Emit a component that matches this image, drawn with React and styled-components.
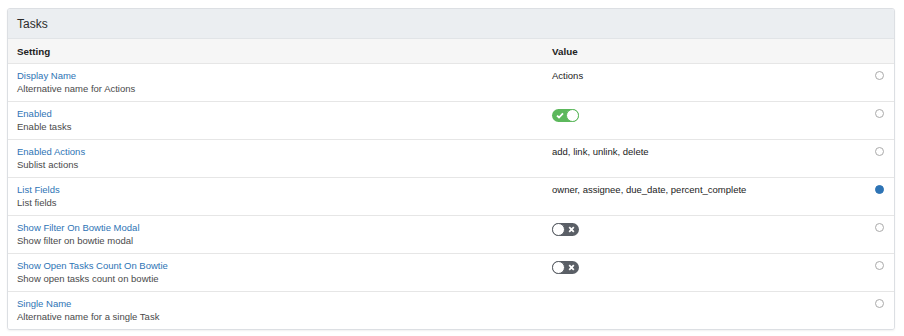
import styled, { createGlobalStyle } from "styled-components";

const Global = createGlobalStyle`
  body {
    margin: 0;
    background: #fff;
    font-family: "Liberation Sans", Arial, sans-serif;
    color: #333;
  }
`;

const Page = styled.div`
  padding: 8px 9px 7px 7px;
`;

const Panel = styled.div`
  border: 1px solid #dcdfe3;
  border-radius: 3px;
  background: #fff;
  box-shadow: 0 1px 2px rgba(0, 0, 0, 0.06);
  overflow: hidden;
`;

const PanelHeading = styled.div`
  background: #ebeef1;
  border-bottom: 1px solid #e1e4e7;
  height: 29px;
  display: flex;
  align-items: center;
  padding: 0 9px;
  font-size: 12px;
  color: #2b2b2b;
`;

const Row = styled.div`
  display: grid;
  grid-template-columns: 535px 1fr 30px;
  border-bottom: 1px solid #e6e6e6;
  background: ${(p) => (p.head ? "#f6f6f6" : "#fff")};
  height: ${(p) => (p.head ? "24px" : "37px")};
  &:last-child {
    border-bottom: none;
  }
`;

const HeadCell = styled.div`
  padding-left: 9px;
  display: flex;
  align-items: center;
  font-size: 9.8px;
  font-weight: bold;
  color: #222;
`;

const Cell = styled.div`
  padding: 6px 0 0 9px;
  display: flex;
  flex-direction: column;
  gap: 2px;
`;

const Name = styled.a`
  font-size: 9.5px;
  color: #2e74b5;
  text-decoration: none;
  line-height: 11px;
`;

const Desc = styled.div`
  font-size: 9.5px;
  color: #4a4a4a;
  line-height: 11px;
`;

const Value = styled.div`
  font-size: 9.5px;
  color: #222;
  line-height: 11px;
`;

const Track = styled.div`
  width: 27px;
  height: 13px;
  border-radius: 7px;
  margin-top: 1px;
  background: ${(p) => (p.on ? "#5cb85c" : "#5a5f66")};
  position: relative;
  display: flex;
  align-items: center;
  justify-content: ${(p) => (p.on ? "flex-start" : "flex-end")};
  padding: 0 4px;
  box-sizing: border-box;
`;

const Knob = styled.span`
  position: absolute;
  top: 0;
  ${(p) => (p.on ? "right: 0;" : "left: 0;")}
  width: 13px;
  height: 13px;
  border-radius: 50%;
  background: #fff;
  box-sizing: border-box;
  border: 1px solid ${(p) => (p.on ? "#5cb85c" : "#5a5f66")};
`;

const RadioCell = styled.div`
  display: flex;
  justify-content: center;
  padding-top: 7px;
`;

const Radio = styled.span`
  width: 9px;
  height: 9px;
  border-radius: 50%;
  box-sizing: border-box;
  border: 1px solid ${(p) => (p.checked ? "#2e74b5" : "#aaa")};
  background: ${(p) => (p.checked ? "#2e74b5" : "#fff")};
`;

const Toggle = ({ on }) => (
  <Track on={on}>
    {on ? (
      <svg width="8" height="7" viewBox="0 0 8 7">
        <path d="M1 3.6 L3 5.5 L7 1.3" stroke="#fff" strokeWidth="1.8" fill="none" />
      </svg>
    ) : (
      <svg width="7" height="7" viewBox="0 0 7 7">
        <path d="M1.2 1.2 L5.8 5.8 M5.8 1.2 L1.2 5.8" stroke="#fff" strokeWidth="1.8" />
      </svg>
    )}
    <Knob on={on} />
  </Track>
);

const settings = [
  { name: "Display Name", desc: "Alternative name for Actions", value: "Actions" },
  { name: "Enabled", desc: "Enable tasks", toggle: true },
  { name: "Enabled Actions", desc: "Sublist actions", value: "add, link, unlink, delete" },
  {
    name: "List Fields",
    desc: "List fields",
    value: "owner, assignee, due_date, percent_complete",
    checked: true,
  },
  { name: "Show Filter On Bowtie Modal", desc: "Show filter on bowtie modal", toggle: false },
  {
    name: "Show Open Tasks Count On Bowtie",
    desc: "Show open tasks count on bowtie",
    toggle: false,
  },
  { name: "Single Name", desc: "Alternative name for a single Task", value: "" },
];

export default function App() {
  return (
    <Page>
      <Global />
      <Panel>
        <PanelHeading>Tasks</PanelHeading>
        <Row head>
          <HeadCell>Setting</HeadCell>
          <HeadCell>Value</HeadCell>
          <div />
        </Row>
        {settings.map((s) => (
          <Row key={s.name}>
            <Cell>
              <Name href="#">{s.name}</Name>
              <Desc>{s.desc}</Desc>
            </Cell>
            <Cell>
              {typeof s.toggle === "boolean" ? (
                <Toggle on={s.toggle} />
              ) : (
                <Value>{s.value}</Value>
              )}
            </Cell>
            <RadioCell>
              <Radio checked={s.checked} />
            </RadioCell>
          </Row>
        ))}
      </Panel>
    </Page>
  );
}
